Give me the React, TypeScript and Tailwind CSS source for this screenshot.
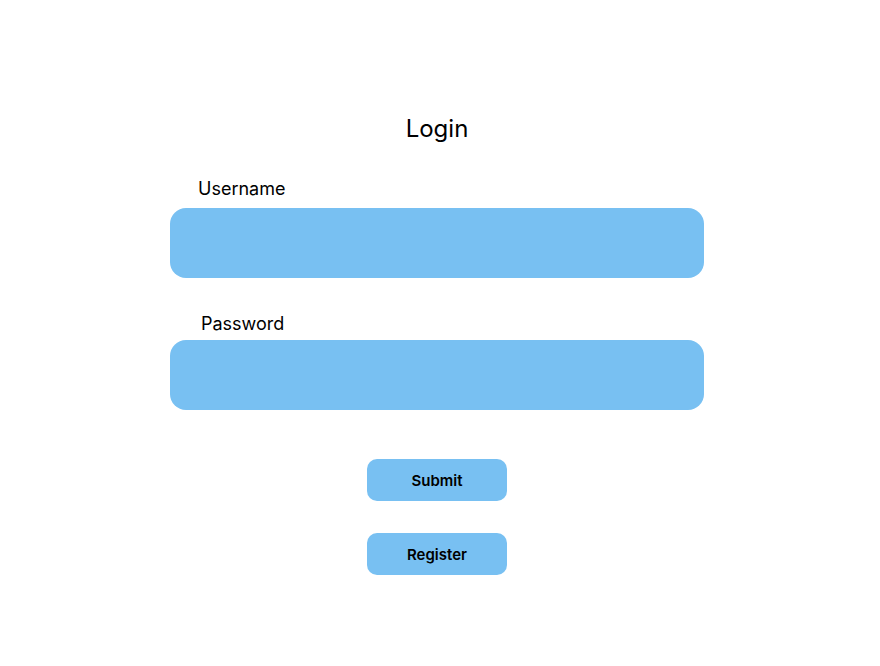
export default function App() {
  return (
    <div className="min-h-[666px] w-[880px] bg-white text-black font-['Inter',sans-serif]">
      <div className="mx-auto w-[534px] -translate-x-[3px] pt-[113px] flex flex-col">
        <h1 className="text-center text-[24px] leading-[32px] font-normal">Login</h1>

        <label className="mt-[32px] ml-[28px] text-[18px] leading-[24px]">Username</label>
        <input
          type="text"
          className="mt-[7px] h-[70px] w-full rounded-[16px] bg-[#78c0f2] px-4 outline-none"
        />

        <label className="mt-[34px] ml-[31px] text-[18px] leading-[24px]">Password</label>
        <input
          type="password"
          className="mt-[4px] h-[70px] w-full rounded-[16px] bg-[#78c0f2] px-4 outline-none"
        />

        <div className="mt-[49px] flex flex-col items-center gap-[32px]">
          <button className="h-[42px] w-[140px] pt-[2px] rounded-[10px] bg-[#78c0f2] text-[15px] font-semibold font-['Inter',sans-serif]">
            Submit
          </button>
          <button className="h-[42px] w-[140px] pt-[2px] rounded-[10px] bg-[#78c0f2] text-[15px] font-semibold font-['Inter',sans-serif]">
            Register
          </button>
        </div>
      </div>
    </div>
  );
}
